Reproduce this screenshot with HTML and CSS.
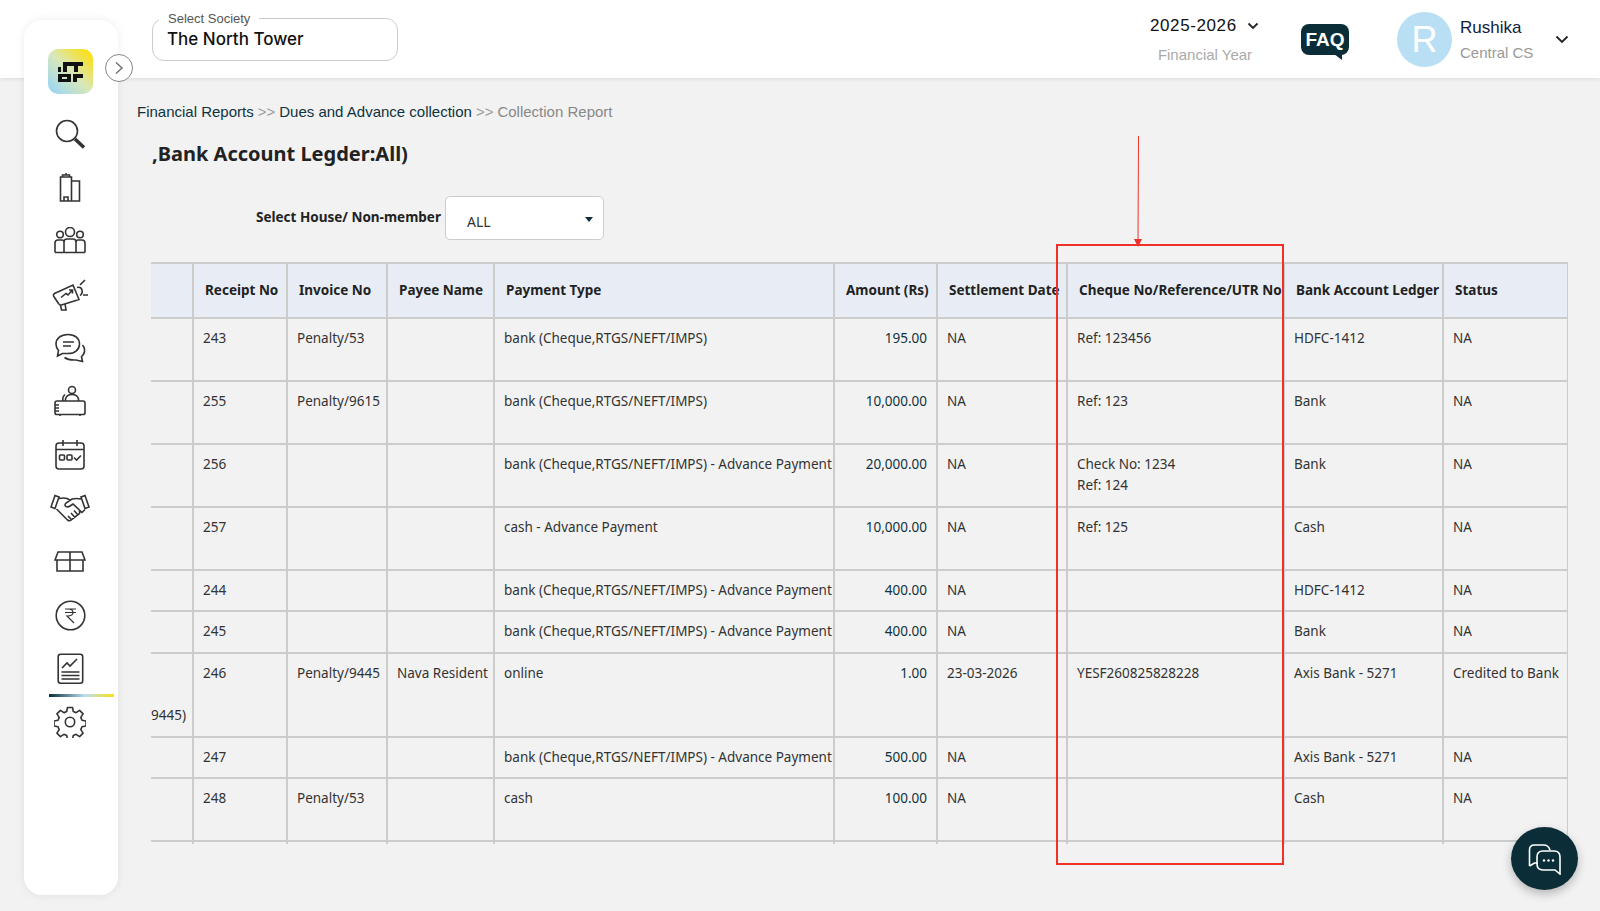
FILE: index.html
```html
<!DOCTYPE html>
<html lang="en">
<head>
    <meta charset="utf-8">
    <title>Collection Report</title>
    <link rel="stylesheet" href="styles.css">
</head>
<body>
<div class="topbar">
    <div class="societyBox">
        <span class="societyBox__label">Select Society</span>
        <span class="societyBox__value">The North Tower</span>
    </div>
    <div class="yearBlock">
        <div class="yearBlock__value">
            2025-2026
            <svg class="chevron" width="12" height="8" viewBox="0 0 12 8"><path d="M1.5 1.5 6 6l4.500-4.500"/></svg>
        </div>
        <div class="yearBlock__label">Financial Year</div>
    </div>
    <div class="faq">
        <span class="faq__text">FAQ</span>
        <svg class="faq__tail" width="8" height="6" viewBox="0 0 8 6"><path d="M0 0h8v6z"/></svg>
    </div>
    <div class="userBlock">
        <div class="avatar">R</div>
        <div class="userBlock__info">
            <div class="userBlock__name">Rushika</div>
            <div class="userBlock__role">Central CS</div>
        </div>
        <svg class="chevron userBlock__chevron" width="14" height="9" viewBox="0 0 14 9"><path d="M1.500 1.500 7 7l5.500-5.500"/></svg>
    </div>
</div>

<div class="sidebar">
    <div class="logo">
        <svg width="25" height="24" viewBox="0 0 25 24">
            <path d="M0 7h3v5H0zM5 2h20v4h-5v6h-4V6H9v6H5zM0 14h13v8H0zM4 17v2h5v-2zM15 14h10v4h-6v4h-4z" fill="#111" fill-rule="evenodd"/>
        </svg>
    </div>
    <div class="toggle">
        <svg width="10" height="14" viewBox="0 0 10 14"><path d="M2 1.500 8 7l-6 5.500"/></svg>
    </div>
    <div class="nav">
        <div class="nav__item">
            <svg width="32" height="32" viewBox="0 0 32 32"><circle cx="13" cy="13" r="10.500"/><path d="M21 21l9 8.500" stroke-width="3.500"/></svg>
        </div>
        <div class="nav__item">
            <svg width="22" height="30" viewBox="0 0 22 30"><path d="M1.500 29V5h11v24zM12.500 9h8v20h-8zM1.500 29h19M5 29v-4h4v4M3.500 5V3h7v2M7 3V1"/></svg>
        </div>
        <div class="nav__item">
            <svg width="32" height="27" viewBox="0 0 32 27"><circle cx="6" cy="7.500" r="3.300"/><circle cx="16" cy="5" r="4.500"/><circle cx="26" cy="7.500" r="3.300"/><path d="M1 25.500V16q0-3 3-3h4q2 0 2 2v10.500M10 25.500V15q0-3 3-3h6q3 0 3 3v10.500M22 25.500V15q0-2 2-2h4q3 0 3 3v9.500M1 25.500h30"/></svg>
        </div>
        <div class="nav__item">
            <svg width="36" height="33" viewBox="0 0 36 33"><path d="M2.500 15.500 21 7l6 14.500-17.500 5.500q-2 .5-3-1.500L1.500 18q-.5-1.500 1-2.500zM8.500 27l1 5H14l-1-6.500M25 9.500q4-1 5 2.500t-2 5.500M28 7l5-5M31 17h5M9 19.500l5-4 2 1.500 4-4.500M17 12h3.500v3.500"/></svg>
        </div>
        <div class="nav__item">
            <svg width="31" height="30" viewBox="0 0 31 30"><path d="M13 1.500c7 0 11.500 4 11.500 9.500s-4.500 9.500-11.500 9.500H7.500L2.500 23l1-5.500Q1 15 1 11C1 5.500 6 1.500 13 1.500zM9.500 24.500q4 3 11.500 2.500l6.500 1.500-1-5q3.500-3 3-7-.3-2.500-2-4.500M8 9h11M8 13h8"/></svg>
        </div>
        <div class="nav__item">
            <svg width="32" height="32" viewBox="0 0 32 32"><circle cx="18" cy="5" r="3.500"/><path d="M11.500 16v-2q1-4.500 6.500-4.500t6.500 4.500v2M9 16q-1-4 2-6.500M3 16h26q2 0 2 2v10q0 1.500-2 1.500H3q-2 0-2-1.500V18q0-2 2-2zM1 20h4M1 23h4M1 26h4M6 29.500v1.500M26 29.500v1.500"/></svg>
        </div>
        <div class="nav__item">
            <svg width="30" height="31" viewBox="0 0 30 31"><rect x="1" y="4" width="28" height="26" rx="3"/><path d="M1 10.500h28M8 1v6M22 1v6M19 18.500l2.500 2.500 4.500-4.500"/><rect x="4.500" y="16" width="5" height="5" rx="1"/><rect x="12" y="16" width="5" height="5" rx="1"/></svg>
        </div>
        <div class="nav__item">
            <svg width="40" height="28" viewBox="0 0 40 28"><path d="M5 1.500 1 13l4 1.500L9 3zM35 1.500 39 13l-4 1.500L31 3zM9 4.500q5-1 8 0l3 1.500M31 5q-5-1-9 0l-6 4q-2 2 0 3.500 2 1 4-.5l3-2 9 8.500 3-3M6.500 15l11 11q2 1.500 3.500 0l8-6q1.500-1.500 0-3M18 22l3 3M21 19l4 4.500M24 16.500l4 4.500"/></svg>
        </div>
        <div class="nav__item">
            <svg width="32" height="21" viewBox="0 0 32 21"><path d="M4 1h24l3 8H1zM3 9v11h26V9M16 1v19"/></svg>
        </div>
        <div class="nav__item">
            <svg width="31" height="31" viewBox="0 0 31 31"><circle cx="15.500" cy="15.500" r="14.300"/><path d="M10 9h11M10 12.500h11M13 9q5 0 5 3.500T12 16l7 7" stroke-width="1.200"/></svg>
        </div>
        <div class="nav__item nav__item_active">
            <svg width="27" height="31" viewBox="0 0 27 31"><rect x="1.200" y="1.200" width="24.500" height="29" rx="2.500"/><path d="M5 15l5-5 3 3 7-7M4.500 19h18M4.500 22.500h18M4.500 26h18"/></svg>
        </div>
        <div class="nav__item">
            <svg width="32" height="32" viewBox="0 0 32 32"><circle cx="16" cy="16" r="4.700"/><path d="M13.500 1.500h5l.8 4 2.800 1.200 3.500-2.300 3.500 3.500-2.300 3.500 1.200 2.800 4 .8v5l-4 .8-1.200 2.800 2.300 3.500-3.500 3.500-3.500-2.300-2.800 1.200-.8 4h-5l-.8-4-2.800-1.200-3.500 2.300-3.500-3.500 2.300-3.500-1.200-2.800-4-.8v-5l4-.8 1.200-2.800-2.300-3.500 3.500-3.500 3.500 2.300 2.800-1.200z" stroke-linejoin="round"/></svg>
        </div>
    </div>
</div>

<div class="content">
    <div class="breadcrumbs">
        <span class="breadcrumbs__link">Financial Reports</span>
        <span class="breadcrumbs__sep">&gt;&gt;</span>
        <span class="breadcrumbs__link">Dues and Advance collection</span>
        <span class="breadcrumbs__sep">&gt;&gt;</span>
        <span class="breadcrumbs__current">Collection Report</span>
    </div>
    <h2 class="title">,Bank Account Legder:All)</h2>
    <div class="filter">
        <label class="filter__label">Select House/ Non-member</label>
        <div class="filter__select">ALL<span class="filter__caret"></span></div>
    </div>
    <div class="tableWrap">
        <table class="report">
            <colgroup>
                <col class="col-0"><col class="col-1"><col class="col-2"><col class="col-3"><col class="col-4">
                <col class="col-5"><col class="col-6"><col class="col-7"><col class="col-8"><col class="col-9">
            </colgroup>
            <thead>
            <tr>
                <th></th><th>Receipt No</th><th>Invoice No</th><th>Payee Name</th><th>Payment Type</th>
                <th>Amount (Rs)</th><th>Settlement Date</th><th>Cheque No/Reference/UTR No</th><th>Bank Account Ledger</th><th>Status</th>
            </tr>
            </thead>
            <tbody>
            <tr class="row-m">
                <td></td><td>243</td><td>Penalty/53</td><td></td><td>bank (Cheque,RTGS/NEFT/IMPS)</td>
                <td class="amount">195.00</td><td>NA</td><td>Ref: 123456</td><td>HDFC-1412</td><td>NA</td>
            </tr>
            <tr class="row-m">
                <td></td><td>255</td><td>Penalty/9615</td><td></td><td>bank (Cheque,RTGS/NEFT/IMPS)</td>
                <td class="amount">10,000.00</td><td>NA</td><td>Ref: 123</td><td>Bank</td><td>NA</td>
            </tr>
            <tr class="row-m">
                <td></td><td>256</td><td></td><td></td><td>bank (Cheque,RTGS/NEFT/IMPS) - Advance Payment</td>
                <td class="amount">20,000.00</td><td>NA</td><td>Check No: 1234<br>Ref: 124</td><td>Bank</td><td>NA</td>
            </tr>
            <tr class="row-m">
                <td></td><td>257</td><td></td><td></td><td>cash - Advance Payment</td>
                <td class="amount">10,000.00</td><td>NA</td><td>Ref: 125</td><td>Cash</td><td>NA</td>
            </tr>
            <tr>
                <td></td><td>244</td><td></td><td></td><td>bank (Cheque,RTGS/NEFT/IMPS) - Advance Payment</td>
                <td class="amount">400.00</td><td>NA</td><td></td><td>HDFC-1412</td><td>NA</td>
            </tr>
            <tr>
                <td></td><td>245</td><td></td><td></td><td>bank (Cheque,RTGS/NEFT/IMPS) - Advance Payment</td>
                <td class="amount">400.00</td><td>NA</td><td></td><td>Bank</td><td>NA</td>
            </tr>
            <tr class="row-l">
                <td class="cutCell">9445)</td><td>246</td><td>Penalty/9445</td><td>Nava Resident</td><td>online</td>
                <td class="amount">1.00</td><td>23-03-2026</td><td>YESF260825828228</td><td>Axis Bank - 5271</td><td>Credited to Bank</td>
            </tr>
            <tr>
                <td></td><td>247</td><td></td><td></td><td>bank (Cheque,RTGS/NEFT/IMPS) - Advance Payment</td>
                <td class="amount">500.00</td><td>NA</td><td></td><td>Axis Bank - 5271</td><td>NA</td>
            </tr>
            <tr class="row-m">
                <td></td><td>248</td><td>Penalty/53</td><td></td><td>cash</td>
                <td class="amount">100.00</td><td>NA</td><td></td><td>Cash</td><td>NA</td>
            </tr>
            <tr>
                <td></td><td>249</td><td></td><td></td><td>bank (Cheque,RTGS/NEFT/IMPS) - Advance Payment</td>
                <td class="amount">100.00</td><td>NA</td><td></td><td>Bank</td><td>NA</td>
            </tr>
            </tbody>
        </table>
    </div>
</div>

<div class="markBox"></div>
<svg class="markArrow" width="12" height="112" viewBox="0 0 12 112"><path d="M6.500 0 6 106" fill="none" stroke="#f0312a" stroke-width="1"/><path d="M2 103h8l-4 8z" fill="#f0312a"/></svg>

<div class="chatButton">
    <svg width="34" height="32" viewBox="0 0 34 32"><path d="M1.500 23V7q0-5 5-5h9q5 0 6.500 5M1.500 23l5-3h3.500"/><path d="M15 8h11q6 0 6 6v17l-5-4H15q-6 0-6-6v-7q0-6 6-6z"/><circle cx="16" cy="17.500" r="1.200" class="dot"/><circle cx="20.500" cy="17.500" r="1.200" class="dot"/><circle cx="25" cy="17.500" r="1.200" class="dot"/></svg>
</div>
</body>
</html>
```

FILE: styles.css
```css
body {
    font-family: 'Liberation Sans', sans-serif;
    margin: 0;
    padding: 0;
    width: 1600px;
    height: 911px;
    overflow: hidden;
    position: relative;
    background: #f2f2f2;
    color: #222;
}

.topbar {
    display: flex;
    align-items: center;
    height: 78px;
    box-sizing: border-box;
    padding-left: 152px;
    background: #fff;
    box-shadow: 0 1px 4px rgba(0, 0, 0, 0.1);
}

.societyBox {
    position: relative;
    width: 246px;
    height: 43px;
    box-sizing: border-box;
    margin-top: 1px;
    padding: 10px 14px 0;
    border: 1px solid #ccc;
    border-radius: 12px;
}

.societyBox__label {
    position: absolute;
    top: -8px;
    left: 6px;
    padding: 0 9px;
    background: #fff;
    font-size: 13px;
    color: #555;
}

.societyBox__value {
    font-family: Inter, sans-serif;
    font-size: 17px;
    font-weight: 500;
    color: #111;
}

.yearBlock {
    margin-left: 752px;
    width: 110px;
    text-align: center;
}

.yearBlock__value {
    display: flex;
    align-items: center;
    gap: 10px;
    font-size: 17px;
    letter-spacing: 0.6px;
    color: #111;
}

.yearBlock__label {
    margin-top: 10px;
    font-size: 15px;
    color: #aaa;
}

.chevron path {
    fill: none;
    stroke: #222;
    stroke-width: 1.8;
}

.faq {
    position: relative;
    margin-left: 41px;
    width: 48px;
    height: 31px;
    margin-top: 1px;
    border-radius: 8px;
    background: #0a2d38;
    text-align: center;
}

.faq__text {
    font-size: 19px;
    font-weight: 700;
    line-height: 32px;
    color: #fff;
}

.faq__tail {
    position: absolute;
    right: 7px;
    bottom: -5px;
    fill: #0a2d38;
}

.userBlock {
    display: flex;
    align-items: center;
    margin-left: 48px;
}

.avatar {
    width: 55px;
    height: 55px;
    border-radius: 50%;
    background: #b9dff5;
    color: #fff;
    font-size: 36px;
    line-height: 55px;
    text-align: center;
}

.userBlock__info {
    margin-left: 8px;
    width: 95px;
}

.userBlock__name {
    font-size: 17px;
    color: #12203f;
}

.userBlock__role {
    margin-top: 6px;
    font-size: 15px;
    color: #999;
}

.sidebar {
    position: absolute;
    top: 20px;
    left: 24px;
    width: 94px;
    height: 875px;
    box-sizing: border-box;
    padding-top: 29px;
    background: #fff;
    border-radius: 18px;
    box-shadow: 0 0 10px rgba(0, 0, 0, 0.08);
}

.logo {
    display: flex;
    align-items: center;
    justify-content: center;
    width: 45px;
    height: 45px;
    margin-left: 24px;
    border-radius: 10px;
    background: linear-gradient(45deg, #9ad6f5 5%, #d8e8b8 50%, #fbdf14 92%);
}

.toggle {
    position: absolute;
    top: 34px;
    left: 81px;
    display: flex;
    align-items: center;
    justify-content: center;
    width: 28px;
    height: 28px;
    box-sizing: border-box;
    border: 1px solid #888;
    border-radius: 50%;
    background: #fff;
}

.toggle path {
    fill: none;
    stroke: #777;
    stroke-width: 1.6;
}

.nav {
    display: flex;
    flex-direction: column;
    margin-top: 13px;
}

.nav__item {
    display: flex;
    align-items: center;
    justify-content: center;
    position: relative;
    height: 53.5px;
    margin-right: 2px;
}

.nav__item svg {
    fill: none;
    stroke: #333;
    stroke-width: 1.6;
}

.nav__item_active:after {
    content: '';
    position: absolute;
    left: 25px;
    right: 2px;
    bottom: -1px;
    height: 3px;
    background: linear-gradient(90deg, #0a2d38, #b9dff5 55%, #fbdf14);
}

.content {
    margin-left: 137px;
    padding-top: 25px;
}

.breadcrumbs {
    display: flex;
    gap: 4px;
    font-size: 15px;
    line-height: 17px;
}

.breadcrumbs__link {
    color: #0f3340;
}

.breadcrumbs__sep {
    color: #999;
}

.breadcrumbs__current {
    color: #888;
}

.title {
    margin: 20px 0 0 15px;
    font-family: 'Noto Sans', sans-serif;
    font-size: 20px;
    font-weight: 700;
    line-height: 27px;
    color: #222;
}

.filter {
    display: flex;
    align-items: center;
    margin: 29px 0 0 119px;
}

.filter__label {
    font-family: 'Noto Sans', sans-serif;
    font-size: 13.500px;
    font-weight: 700;
    color: #222;
    margin-bottom: 3px;
}

.filter__select {
    position: relative;
    width: 159px;
    height: 44px;
    box-sizing: border-box;
    margin-left: 4px;
    padding: 15px 0 0 21px;
    background: #fff;
    border: 1px solid #ccc;
    border-radius: 5px;
    font-family: 'Noto Sans', sans-serif;
    font-size: 14px;
    color: #333;
}

.filter__caret {
    position: absolute;
    top: 20px;
    right: 10px;
    border-left: 4px solid transparent;
    border-right: 4px solid transparent;
    border-top: 5px solid #0a2d38;
}

.tableWrap {
    width: 1417px;
    height: 582px;
    margin: 22px 0 0 14px;
    overflow: hidden;
}

.report {
    width: 1417px;
    table-layout: fixed;
    border-collapse: collapse;
    font-family: 'Noto Sans', sans-serif;
    font-size: 13.500px;
    line-height: 21.400px;
}

.col-0 { width: 42px; }
.col-1 { width: 94px; }
.col-2 { width: 100px; }
.col-3 { width: 107px; }
.col-4 { width: 340px; }
.col-5 { width: 103px; }
.col-6 { width: 130px; }
.col-7 { width: 217px; }
.col-8 { width: 159px; }
.col-9 { width: 125px; }

.report th,
.report td {
    border: 2px solid #ccc;
    white-space: nowrap;
    overflow: hidden;
}

.report th:first-child,
.report td:first-child {
    border-left: none;
}

.report th {
    height: 53px;
    padding: 0 0 0 11px;
    background: #e8edf5;
    font-weight: 700;
    text-align: left;
    color: #222;
}

.report td {
    padding: 9px;
    vertical-align: top;
    color: #333;
}

.row-m td {
    height: 43px;
}

.row-l td {
    height: 64px;
}

.report td.cutCell {
    padding-left: 0;
    padding-right: 0;
    vertical-align: bottom;
}

.report td.amount {
    text-align: right;
    color: #0f3340;
}

.markBox {
    position: absolute;
    top: 244px;
    left: 1056px;
    width: 224px;
    height: 617px;
    border: 2px solid #f0312a;
}

.markArrow {
    position: absolute;
    top: 136px;
    left: 1132px;
}

.chatButton {
    position: absolute;
    top: 827px;
    left: 1511px;
    display: flex;
    align-items: center;
    justify-content: center;
    width: 67px;
    height: 63px;
    border-radius: 50%;
    background: #0a2d38;
    box-shadow: 0 4px 10px rgba(0, 0, 0, 0.25);
}

.chatButton svg {
    fill: none;
    stroke: #fff;
    stroke-width: 1.600;
}

.chatButton .dot {
    fill: #fff;
    stroke: none;
}
```
